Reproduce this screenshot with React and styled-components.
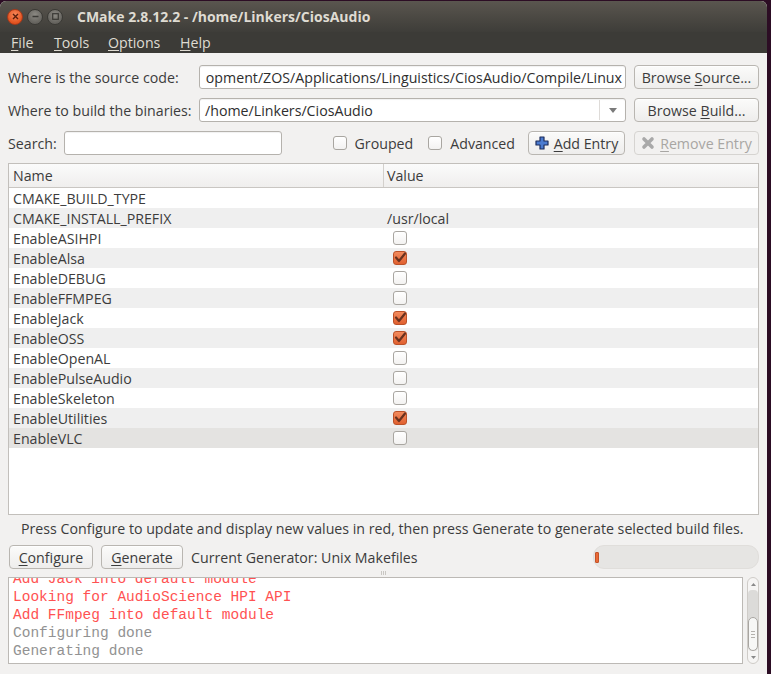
import React from "react";
import styled, { createGlobalStyle } from "styled-components";

const GlobalStyle = createGlobalStyle`
  html, body {
    margin: 0;
    padding: 0;
    background: #2c0d24;
  }
  body {
    width: 771px;
    height: 674px;
    overflow: hidden;
    font-family: "Open Sans", "Liberation Sans", sans-serif;
  }
`;

const entries = [
  { name: "CMAKE_BUILD_TYPE", value: "" },
  { name: "CMAKE_INSTALL_PREFIX", value: "/usr/local" },
  { name: "EnableASIHPI", check: false },
  { name: "EnableAlsa", check: true },
  { name: "EnableDEBUG", check: false },
  { name: "EnableFFMPEG", check: false },
  { name: "EnableJack", check: true },
  { name: "EnableOSS", check: true },
  { name: "EnableOpenAL", check: false },
  { name: "EnablePulseAudio", check: false },
  { name: "EnableSkeleton", check: false },
  { name: "EnableUtilities", check: true },
  { name: "EnableVLC", check: false, selected: true },
];

const logLines = [
  { text: "Add Jack into default module", red: true },
  { text: "Looking for AudioScience HPI API", red: true },
  { text: "Add FFmpeg into default module", red: true },
  { text: "Configuring done" },
  { text: "Generating done" },
];

function CheckBox({ checked }) {
  return (
    <Box $checked={checked}>
      {checked && (
        <svg width="12" height="12" viewBox="0 0 12 12">
          <path d="M2 5.5 L5 9 L11 1.5" fill="none" stroke="#6a321f" strokeWidth="2.2" strokeLinecap="round" strokeLinejoin="round" />
        </svg>
      )}
    </Box>
  );
}

function PlusIcon() {
  return (
    <svg width="14" height="14" viewBox="0 0 14 14">
      <path d="M5 1 H9 V5 H13 V9 H9 V13 H5 V9 H1 V5 H5 Z" fill="#4b7bd0" stroke="#1d2d5c" strokeWidth="1.2" strokeLinejoin="round" />
    </svg>
  );
}

function CrossIcon() {
  return (
    <svg width="14" height="14" viewBox="0 0 14 14">
      <path d="M3 3 L11 11 M11 3 L3 11" stroke="#a9a9a9" strokeWidth="3.6" strokeLinecap="round" />
    </svg>
  );
}

export default function App() {
  return (
    <>
      <GlobalStyle />
      <Window>
        <TitleBar>
          <WinButtons>
            <WinButton $close>
              <svg width="7" height="7" viewBox="0 0 7 7">
                <path d="M1 1 L6 6 M6 1 L1 6" stroke="#5a1d0a" strokeWidth="1.4" />
              </svg>
            </WinButton>
            <WinButton>
              <svg width="7" height="7" viewBox="0 0 7 7">
                <path d="M0.5 3.5 H6.5" stroke="#3a3935" strokeWidth="1.4" />
              </svg>
            </WinButton>
            <WinButton>
              <svg width="7" height="7" viewBox="0 0 7 7">
                <rect x="0.7" y="0.7" width="5.6" height="5.6" fill="none" stroke="#3a3935" strokeWidth="1.2" />
              </svg>
            </WinButton>
          </WinButtons>
          <Title>CMake 2.8.12.2 - /home/Linkers/CiosAudio</Title>
        </TitleBar>
        <MenuBar>
          <MenuItem $w={43}><u>F</u>ile</MenuItem>
          <MenuItem $w={54}><u>T</u>ools</MenuItem>
          <MenuItem $w={72}><u>O</u>ptions</MenuItem>
          <MenuItem><u>H</u>elp</MenuItem>
        </MenuBar>

        <Content>
          <PathGrid>
            <Label>Where is the source code:</Label>
            <TextField $alignEnd>
              <span>opment/ZOS/Applications/Linguistics/CiosAudio/Compile/Linux</span>
            </TextField>
            <Button><span>Browse <u>S</u>ource...</span></Button>

            <Label>Where to build the binaries:</Label>
            <Combo>
              <ComboText>/home/Linkers/CiosAudio</ComboText>
              <ComboArrow>
                <svg width="8" height="5" viewBox="0 0 8 5">
                  <path d="M0 0 H8 L4 5 Z" fill="#7a7a7a" />
                </svg>
              </ComboArrow>
            </Combo>
            <Button><span>Browse <u>B</u>uild...</span></Button>
          </PathGrid>

          <SearchRow>
            <SearchLabel>Search:</SearchLabel>
            <SearchField />
            <Options>
              <Option>
                <CheckBox />
                <span>Grouped</span>
              </Option>
              <Option>
                <CheckBox />
                <span>Advanced</span>
              </Option>
            </Options>
            <Button $width={97}>
              <PlusIcon />
              <span><u>A</u>dd Entry</span>
            </Button>
            <Button $width={125} disabled>
              <CrossIcon />
              <span><u>R</u>emove Entry</span>
            </Button>
          </SearchRow>

          <Table>
            <HeaderRow>
              <HeaderCell $name>Name</HeaderCell>
              <HeaderCell>Value</HeaderCell>
            </HeaderRow>
            {entries.map((e, i) => (
              <Row key={e.name} $alt={i % 2 === 1} $selected={e.selected}>
                <NameCell>{e.name}</NameCell>
                <ValueCell>
                  {"check" in e ? <CheckBox checked={e.check} /> : e.value}
                </ValueCell>
              </Row>
            ))}
          </Table>

          <Message>
            Press Configure to update and display new values in red, then press Generate to generate selected build files.
          </Message>

          <ActionRow>
            <Button $width={84}><span><u>C</u>onfigure</span></Button>
            <Button $width={82}><span><u>G</u>enerate</span></Button>
            <Generator>Current Generator: Unix Makefiles</Generator>
            <Progress>
              <ProgressFill />
            </Progress>
          </ActionRow>

          <Splitter>
            <Grip />
          </Splitter>

          <OutputRow>
            <Output>
              <LogLines>
                {logLines.map((l) => (
                  <LogLine key={l.text} $red={l.red}>{l.text}</LogLine>
                ))}
              </LogLines>
            </Output>
            <ScrollBar>
              <ScrollArrow>
                <svg width="5" height="3" viewBox="0 0 5 3"><path d="M0 3 H5 L2.5 0 Z" fill="#8a8a8a" /></svg>
              </ScrollArrow>
              <ScrollTrack>
                <ScrollThumb>
                  <ThumbGrip />
                </ScrollThumb>
              </ScrollTrack>
              <ScrollArrow>
                <svg width="5" height="3" viewBox="0 0 5 3"><path d="M0 0 H5 L2.5 3 Z" fill="#8a8a8a" /></svg>
              </ScrollArrow>
            </ScrollBar>
          </OutputRow>
        </Content>
      </Window>
    </>
  );
}

const Window = styled.div`
  width: 767px;
  height: 673px;
  margin-top: 1px;
  background: #f2f1f0;
  border-radius: 6px 6px 0 0;
  overflow: hidden;
  display: flex;
  flex-direction: column;
  color: #3c3c3c;
  font-size: 14.2px;
`;

const TitleBar = styled.div`
  height: 31px;
  display: flex;
  align-items: center;
  padding-left: 7px;
  background: linear-gradient(#5a564f, #46443f 70%, #3e3d39);
`;

const WinButtons = styled.div`
  display: flex;
  gap: 4px;
  margin-right: 14px;
`;

const WinButton = styled.div`
  width: 16px;
  height: 16px;
  border-radius: 50%;
  display: flex;
  align-items: center;
  justify-content: center;
  box-sizing: border-box;
  border: 1px solid ${(p) => (p.$close ? "#a8391a" : "#3a3935")};
  background: ${(p) =>
    p.$close
      ? "radial-gradient(circle at 50% 35%, #f78a5c, #e3531f 70%)"
      : "radial-gradient(circle at 50% 35%, #8c8a84, #65635e 70%)"};
`;

const Title = styled.div`
  color: #dfdbd2;
  font-weight: 700;
  font-size: 14px;
`;

const MenuBar = styled.div`
  height: 21px;
  background: #3c3b37;
  display: flex;
  align-items: center;
  padding-left: 11px;
`;

const MenuItem = styled.div`
  color: #dfdbd2;
  font-size: 14.2px;
  width: ${(p) => (p.$w ? `${p.$w}px` : "auto")};
  line-height: 18px;
  & u {
    text-decoration-thickness: 1px;
    text-underline-offset: 2px;
  }
`;

const Content = styled.div`
  flex: 1;
  display: flex;
  flex-direction: column;
  padding: 12px 8px 0 8px;
`;

const PathGrid = styled.div`
  display: grid;
  grid-template-columns: 183px 1fr 125px;
  grid-auto-rows: 24px;
  column-gap: 8px;
  row-gap: 9px;
  align-items: center;
`;

const Label = styled.div`
  color: #3c3c3c;
  white-space: nowrap;
`;

const Field = styled.div`
  height: 24px;
  box-sizing: border-box;
  background: #fff;
  border: 1px solid #b5b2ad;
  border-radius: 3px;
  box-shadow: inset 0 1px 1px rgba(0, 0, 0, 0.06);
`;

const TextField = styled(Field)`
  display: flex;
  align-items: center;
  justify-content: ${(p) => (p.$alignEnd ? "flex-end" : "flex-start")};
  padding: 0 3px;
  overflow: hidden;
  white-space: nowrap;
  color: #2e2e2e;
  & > span {
    flex: none;
  }
`;

const Combo = styled(Field)`
  display: flex;
  align-items: stretch;
`;

const ComboText = styled.div`
  flex: 1;
  display: flex;
  align-items: center;
  padding-left: 5px;
  color: #2e2e2e;
`;

const ComboArrow = styled.div`
  width: 25px;
  border-left: 1px solid #dedbd8;
  display: flex;
  align-items: center;
  justify-content: center;
  margin: 1px 0;
`;

const Button = styled.button`
  height: 24px;
  width: ${(p) => (p.$width ? `${p.$width}px` : "100%")};
  box-sizing: border-box;
  padding: 0 4px;
  display: flex;
  align-items: center;
  justify-content: center;
  gap: 5px;
  font-family: inherit;
  font-size: 14.2px;
  color: ${(p) => (p.disabled ? "#a8a6a3" : "#3c3c3c")};
  background: ${(p) => (p.disabled ? "#f2f1f0" : "linear-gradient(#fbfbfa, #eeedec)")};
  border: 1px solid ${(p) => (p.disabled ? "#d6d4d1" : "#b9b6b1")};
  border-radius: 4px;
  box-shadow: ${(p) => (p.disabled ? "none" : "0 1px 0 rgba(255,255,255,0.8) inset")};
  white-space: nowrap;
  & u {
    text-underline-offset: 2px;
  }
`;

const SearchRow = styled.div`
  display: flex;
  align-items: center;
  height: 24px;
  margin-top: 9px;
  gap: 9px;
`;

const SearchLabel = styled.div`
  width: 47px;
`;

const SearchField = styled(Field)`
  width: 218px;
`;

const Options = styled.div`
  margin-left: auto;
  display: flex;
  align-items: center;
  gap: 15px;
  margin-right: 4px;
`;

const Option = styled.label`
  display: flex;
  align-items: center;
  gap: 8px;
`;

const Box = styled.span`
  width: 14px;
  height: 14px;
  flex: none;
  box-sizing: border-box;
  border-radius: 3px;
  display: inline-flex;
  align-items: center;
  justify-content: center;
  border: 1px solid ${(p) => (p.$checked ? "#bb5128" : "#a9a6a1")};
  background: ${(p) => (p.$checked ? "linear-gradient(#f28b5e, #e0602f)" : "linear-gradient(#ffffff, #f3f2f1)")};
`;

const Table = styled.div`
  margin-top: 8px;
  height: 352px;
  box-sizing: border-box;
  background: #fff;
  border: 1px solid #c2bfbb;
  display: flex;
  flex-direction: column;
`;

const HeaderRow = styled.div`
  height: 24px;
  flex: none;
  box-sizing: border-box;
  display: grid;
  grid-template-columns: 375px 1fr;
  background: linear-gradient(#fbfbfb, #efeeed);
  border-bottom: 1px solid #c9c6c2;
`;

const HeaderCell = styled.div`
  display: flex;
  align-items: center;
  padding-left: ${(p) => (p.$name ? "4px" : "3px")};
  border-right: ${(p) => (p.$name ? "1px solid #d3d0cc" : "none")};
`;

const Row = styled.div`
  height: 20px;
  flex: none;
  display: grid;
  grid-template-columns: 376px 1fr;
  background: ${(p) => (p.$selected ? "#e4e3e1" : p.$alt ? "#efefef" : "#ffffff")};
`;

const NameCell = styled.div`
  display: flex;
  align-items: center;
  padding-left: 4px;
  white-space: nowrap;
`;

const ValueCell = styled.div`
  display: flex;
  align-items: center;
  padding-left: 2px;
  & > span {
    margin-left: 6px;
  }
`;

const Message = styled.div`
  height: 30px;
  box-sizing: border-box;
  padding: 4px 0 0 13px;
  white-space: nowrap;
`;

const ActionRow = styled.div`
  display: flex;
  align-items: center;
  gap: 8px;
  height: 24px;
  padding-left: 1px;
`;

const Generator = styled.div`
  flex: 1;
  white-space: nowrap;
`;

const Progress = styled.div`
  width: 166px;
  height: 24px;
  box-sizing: border-box;
  border-radius: 11px;
  background: #e6e5e3;
  border: 1px solid #e0dedb;
  display: flex;
  align-items: center;
  padding-left: 1px;
`;

const ProgressFill = styled.div`
  width: 4px;
  height: 11px;
  background: #e96a36;
  border-radius: 1px;
  border: 1px solid #c4532a;
  box-sizing: border-box;
`;

const Splitter = styled.div`
  height: 8px;
  display: flex;
  justify-content: center;
  align-items: center;
`;

const Grip = styled.div`
  width: 6px;
  height: 4px;
  background: repeating-linear-gradient(90deg, #c9c7c3 0 1px, transparent 1px 2px);
`;

const OutputRow = styled.div`
  display: flex;
  gap: 4px;
  height: 87px;
`;

const Output = styled.div`
  flex: 1;
  box-sizing: border-box;
  background: #fff;
  border: 1px solid #bcb9b5;
  overflow: hidden;
  padding-left: 4px;
`;

const LogLines = styled.div`
  margin-top: -8px;
`;

const LogLine = styled.div`
  font-family: "Liberation Mono", monospace;
  font-size: 14.5px;
  line-height: 18px;
  white-space: pre;
  color: ${(p) => (p.$red ? "#ff5252" : "#929292")};
`;

const ScrollBar = styled.div`
  width: 12px;
  box-sizing: border-box;
  border: 1px solid #cfccc8;
  border-radius: 6px;
  background: #f6f5f4;
  display: flex;
  flex-direction: column;
`;

const ScrollArrow = styled.div`
  height: 12px;
  display: flex;
  align-items: center;
  justify-content: center;
  flex: none;
`;

const ScrollTrack = styled.div`
  flex: 1;
  background: #dcdbd9;
  display: flex;
  flex-direction: column;
  justify-content: flex-end;
  border-radius: 4px;
`;

const ScrollThumb = styled.div`
  height: 34px;
  box-sizing: border-box;
  background: #f7f7f6;
  border: 1px solid #a8a5a1;
  border-radius: 5px;
  display: flex;
  align-items: center;
  justify-content: center;
`;

const ThumbGrip = styled.div`
  width: 4px;
  height: 7px;
  background: repeating-linear-gradient(#b4b1ad 0 1px, transparent 1px 3px);
`;
